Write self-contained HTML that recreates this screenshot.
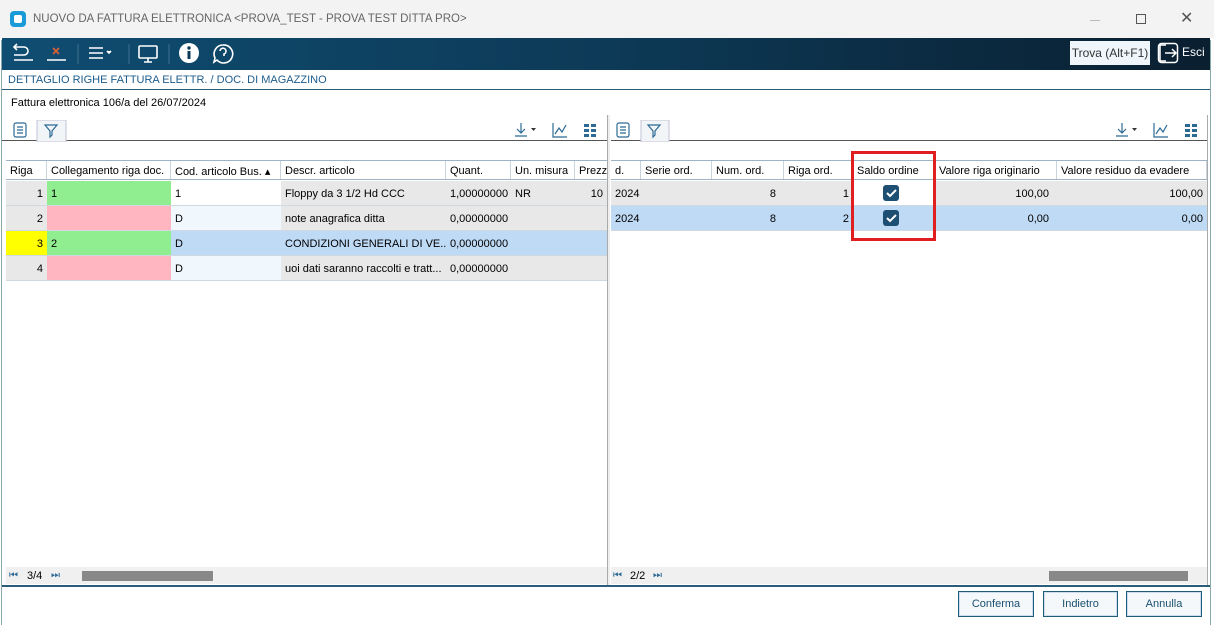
<!DOCTYPE html>
<html><head><style>
*{box-sizing:border-box;margin:0;padding:0}
body{width:1214px;height:627px;background:#fff;font-family:"Liberation Sans",sans-serif;font-size:11px;color:#000;position:relative;overflow:hidden}
.a{position:absolute}
.tb{left:2px;top:38px;width:1208px;height:32px;background:linear-gradient(90deg,#0f4d72,#0d3a57 50%,#0a1f30)}
.hdr{height:20px;background:#fff;border-top:1px solid #9fb3c6;border-bottom:1px solid #9fb3c6}
.c{position:absolute;height:100%;padding:4px 4px;white-space:nowrap;overflow:hidden;border-right:1px solid #c8d4de}
.row{position:absolute;height:25px;border-bottom:1px solid #d0d8e0}
.row .c{padding-top:7px;border-right:none}
.btn{position:absolute;top:591px;height:26px;border:1px solid #1f5c7a;background:#f4f8fb;color:#1a4f6f;font-size:11px;text-align:center;line-height:24px;box-shadow:inset 0 0 0 1px #cde}
</style></head><body>
<div class="a" style="left:0;top:0;width:1214px;height:38px;background:#f3f3f3"></div>
<div class="a" style="left:10px;top:11px;width:16px;height:16px;background:#1a9bd8;border-radius:4px"></div>
<div class="a" style="left:14px;top:15px;width:8px;height:8px;background:#fff;border-radius:2px"></div>
<div class="a" style="left:33px;top:13px;font-size:11.5px;color:#666">NUOVO DA FATTURA ELETTRONICA &lt;PROVA_TEST - PROVA TEST DITTA PRO&gt;</div>
<div class="a" style="left:1090px;top:20px;width:10px;height:1px;background:#bbb"></div>
<div class="a" style="left:1136px;top:14px;width:10px;height:10px;border:1px solid #555"></div>
<div class="a" style="left:1180px;top:8px;font-size:16px;color:#555">✕</div>
<div class="a tb"></div>
<svg class="a" style="left:2px;top:38px" width="250" height="32">
<g stroke="#fff" fill="none" stroke-width="1.6">
<path d="M12 9h10a4 4 0 0 1 0 8h-10M15 6l-3 3 3 3"/><path d="M12 22h19"/>
<path d="M45 22h19"/><path d="M51 10l6 6M57 10l-6 6" stroke="#e06030"/>
<path d="M87 10h14M87 15h14M87 20h14"/><path d="M105 13l2 2 2-2" fill="#fff"/>
<rect x="137" y="8" width="18" height="12" rx="1"/><path d="M142 24h8M146 20v4"/>
<path d="M221 7a9 9 0 1 1 -6 15l-3 2 1 -4a9 9 0 0 1 8-13z"/>
<path d="M218 13a3 3 0 1 1 4 3v2"/>
</g>
<circle cx="187" cy="15" r="10" fill="#fff"/><rect x="185.5" y="13" width="3" height="8" fill="#0d3a57"/><circle cx="187" cy="10" r="1.7" fill="#0d3a57"/>
<path d="M76 6v20M127 6v20M167 6v20" stroke="#3d7190"/>
</svg>
<div class="a" style="left:1070px;top:41px;width:80px;height:24px;background:#eef6fb;color:#333;font-size:12px;line-height:24px;text-align:center">Trova (Alt+F1)</div>
<svg class="a" style="left:1157px;top:42px" width="22" height="22"><g stroke="#fff" fill="none" stroke-width="1.5"><path d="M9 3H3v16h6"/><path d="M8 11h11M15 7l4 4-4 4"/><rect x="1.5" y="1.5" width="19" height="19" rx="3"/></g></svg>
<div class="a" style="left:1182px;top:45px;color:#fff;font-size:12px">Esci</div>
<div class="a" style="left:2px;top:70px;width:1208px;height:20px;border-bottom:1px solid #2a5d7a;color:#1d5c8c;font-size:11px;padding:4px 6px">DETTAGLIO RIGHE FATTURA ELETTR. / DOC. DI MAGAZZINO</div>
<div class="a" style="left:11px;top:97px">Fattura elettronica 106/a del 26/07/2024</div>
<div class="a" style="left:2px;top:140px;width:605px;height:1px;background:#555"></div>
<div class="a" style="left:611px;top:140px;width:597px;height:1px;background:#555"></div>
<div class="a" style="left:607px;top:115px;width:3px;height:470px;background:#eee;border-left:1px solid #aaa"></div>
<div class="a" style="left:1207px;top:115px;width:1px;height:470px;background:#aaa"></div>
<div class="a" style="left:1px;top:40px;width:1px;height:585px;background:#8aa"></div>
<div class="a" style="left:1210px;top:40px;width:1px;height:585px;background:#8aa"></div>
<svg class="a" style="left:10px;top:120px" width="600" height="22"><g stroke="#2c6a95" fill="none" stroke-width="1.2">
<rect x="4" y="3" width="12" height="14" rx="2"/><path d="M7 7h6M7 10h6M7 13h6"/>
<rect x="27" y="0" width="29" height="22" fill="#f2f5f8" stroke="#ccd"/><path d="M35 5h12l-5 6v4l-2 2v-6z"/>
<path d="M511 3v10M507 9l4 4 4-4M505 16h12"/><path d="M521 8h5l-2.5 3z" fill="#333" stroke="none"/>
<path d="M543 3v14h14M545 14l4-6 3 4 4-7"/></g>
<g fill="#2c6a95"><rect x="574" y="4" width="5" height="3"/><rect x="581" y="4" width="5" height="3"/><rect x="574" y="9" width="5" height="3"/><rect x="581" y="9" width="5" height="3"/><rect x="574" y="14" width="5" height="3"/><rect x="581" y="14" width="5" height="3"/></g></svg>
<svg class="a" style="left:611px;top:120px" width="600" height="22"><g stroke="#2c6a95" fill="none" stroke-width="1.2">
<rect x="6" y="3" width="12" height="14" rx="2"/><path d="M9 7h6M9 10h6M9 13h6"/>
<rect x="30" y="0" width="28" height="22" fill="#f2f5f8" stroke="#ccd"/><path d="M37 5h12l-5 6v4l-2 2v-6z"/>
<path d="M511 3v10M507 9l4 4 4-4M505 16h12"/><path d="M521 8h5l-2.5 3z" fill="#333" stroke="none"/>
<path d="M543 3v14h14M545 14l4-6 3 4 4-7"/></g>
<g fill="#2c6a95"><rect x="574" y="4" width="5" height="3"/><rect x="581" y="4" width="5" height="3"/><rect x="574" y="9" width="5" height="3"/><rect x="574" y="14" width="5" height="3"/><rect x="581" y="9" width="5" height="3"/><rect x="581" y="14" width="5" height="3"/></g></svg>
<div class="a hdr" style="left:6px;top:160px;width:601px">
<div class="c" style="left:0;width:41px">Riga</div><div class="c" style="left:41px;width:124px">Collegamento riga doc.</div><div class="c" style="left:165px;width:110px">Cod. articolo Bus. ▴</div><div class="c" style="left:275px;width:165px">Descr. articolo</div><div class="c" style="left:440px;width:65px">Quant.</div><div class="c" style="left:505px;width:64px">Un. misura</div><div class="c" style="left:569px;width:32px;border:none">Prezz</div></div>
<div class="a row" style="left:6px;top:181px;width:601px;background:#e8e8e8"><div class="c" style="left:0;width:41px;text-align:right">1</div><div class="c" style="left:41px;width:124px;background:#90ee90">1</div><div class="c" style="left:165px;width:110px;background:#fff">1</div><div class="c" style="left:275px;width:165px">Floppy da 3 1/2 Hd CCC</div><div class="c" style="left:440px;width:65px">1,00000000</div><div class="c" style="left:505px;width:64px">NR</div><div class="c" style="left:569px;width:32px;text-align:right">10</div></div>
<div class="a row" style="left:6px;top:206px;width:601px;background:#e8e8e8"><div class="c" style="left:0;width:41px;text-align:right">2</div><div class="c" style="left:41px;width:124px;background:#ffb6c1"></div><div class="c" style="left:165px;width:110px;background:#f0f7fd">D</div><div class="c" style="left:275px;width:165px">note anagrafica ditta</div><div class="c" style="left:440px;width:65px">0,00000000</div></div>
<div class="a row" style="left:6px;top:231px;width:601px;background:#bfdaf5"><div class="c" style="left:0;width:41px;text-align:right;background:#ffff00">3</div><div class="c" style="left:41px;width:124px;background:#90ee90">2</div><div class="c" style="left:165px;width:110px">D</div><div class="c" style="left:275px;width:165px">CONDIZIONI GENERALI DI VE...</div><div class="c" style="left:440px;width:65px">0,00000000</div></div>
<div class="a row" style="left:6px;top:256px;width:601px;background:#e8e8e8"><div class="c" style="left:0;width:41px;text-align:right">4</div><div class="c" style="left:41px;width:124px;background:#ffb6c1"></div><div class="c" style="left:165px;width:110px;background:#f0f7fd">D</div><div class="c" style="left:275px;width:165px">uoi dati saranno raccolti e tratt...</div><div class="c" style="left:440px;width:65px">0,00000000</div></div>
<div class="a hdr" style="left:611px;top:160px;width:596px">
<div class="c" style="left:0;width:30px">d.</div><div class="c" style="left:30px;width:71px">Serie ord.</div><div class="c" style="left:101px;width:72px">Num. ord.</div><div class="c" style="left:173px;width:69px">Riga ord.</div><div class="c" style="left:242px;width:82px">Saldo ordine</div><div class="c" style="left:324px;width:122px">Valore riga originario</div><div class="c" style="left:446px;width:150px">Valore residuo da evadere</div></div>
<div class="a row" style="left:611px;top:181px;width:596px;background:#e8e8e8"><div class="c" style="left:0;width:40px">2024</div><div class="c" style="left:101px;width:68px;text-align:right">8</div><div class="c" style="left:173px;width:69px;text-align:right">1</div><div class="c" style="left:242px;width:82px;background:#fff"></div><div class="c" style="left:324px;width:118px;text-align:right">100,00</div><div class="c" style="left:446px;width:150px;text-align:right">100,00</div></div>
<div class="a row" style="left:611px;top:206px;width:596px;background:#bfdaf5"><div class="c" style="left:0;width:40px">2024</div><div class="c" style="left:101px;width:68px;text-align:right">8</div><div class="c" style="left:173px;width:69px;text-align:right">2</div><div class="c" style="left:324px;width:118px;text-align:right">0,00</div><div class="c" style="left:446px;width:150px;text-align:right">0,00</div></div>
<svg class="a" style="left:882px;top:184px" width="18" height="45"><g><rect x="1" y="1" width="16" height="16" rx="3" fill="#1c4f72"/><rect x="1" y="26" width="16" height="16" rx="3" fill="#1c4f72"/><path d="M5 9l3 3 6-6M5 34l3 3 6-6" stroke="#fff" stroke-width="2" fill="none"/></g></svg>
<div class="a" style="left:851px;top:151px;width:85px;height:90px;border:3px solid #e02020"></div>
<div class="a" style="left:6px;top:567px;width:601px;height:17px;background:#f0f0f0"></div>
<div class="a" style="left:9px;top:570px;font-size:10px;color:#2c6a95">⏮</div><div class="a" style="left:27px;top:570px">3/4</div><div class="a" style="left:51px;top:570px;font-size:10px;color:#2c6a95">⏭</div>
<div class="a" style="left:82px;top:571px;width:131px;height:10px;background:#888"></div>
<div class="a" style="left:611px;top:567px;width:596px;height:17px;background:#f0f0f0"></div>
<div class="a" style="left:613px;top:570px;font-size:10px;color:#2c6a95">⏮</div><div class="a" style="left:630px;top:570px">2/2</div><div class="a" style="left:653px;top:570px;font-size:10px;color:#2c6a95">⏭</div>
<div class="a" style="left:1049px;top:571px;width:139px;height:10px;background:#888"></div>
<div class="a" style="left:2px;top:585px;width:1208px;height:2px;background:#2a5d7a"></div>
<div class="btn" style="left:958px;width:76px">Conferma</div>
<div class="btn" style="left:1043px;width:75px">Indietro</div>
<div class="btn" style="left:1126px;width:76px">Annulla</div>
</body></html>
